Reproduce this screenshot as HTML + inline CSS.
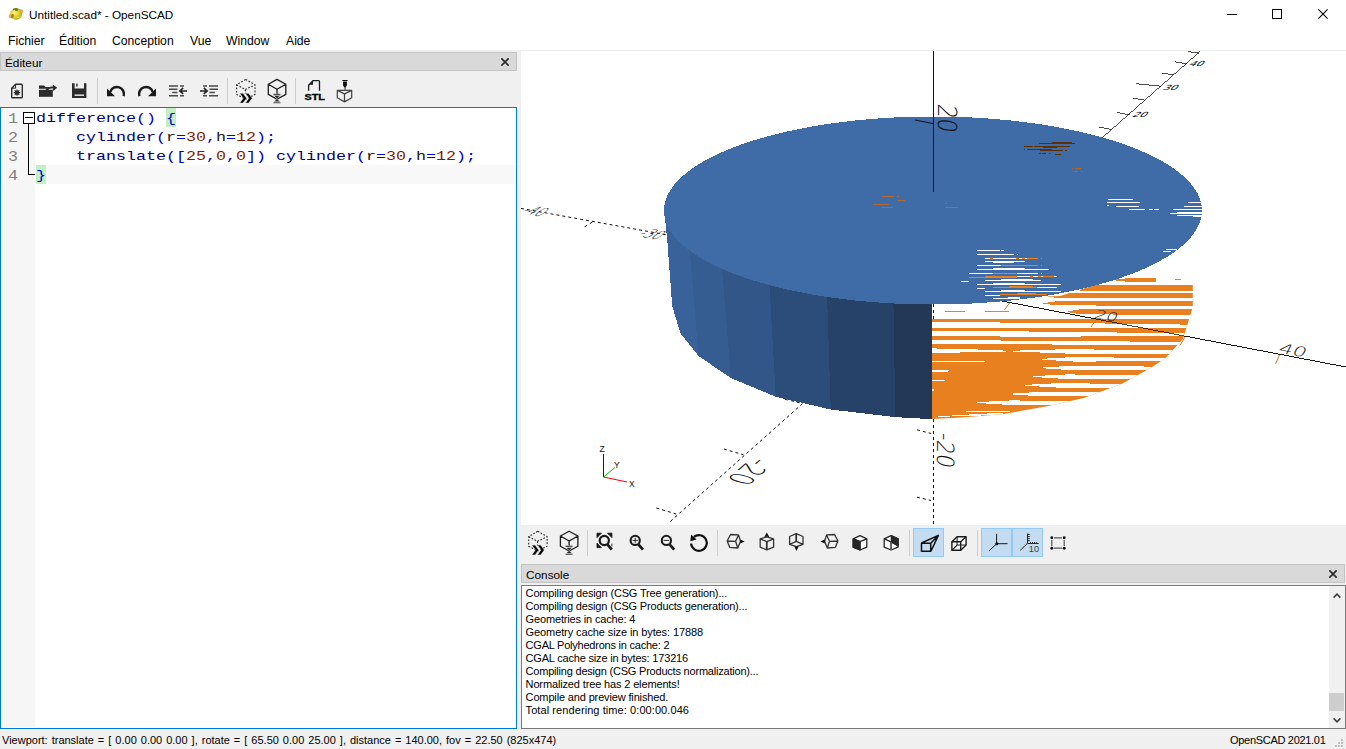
<!DOCTYPE html>
<html><head><meta charset="utf-8"><title>Untitled.scad* - OpenSCAD</title>
<style>
*{box-sizing:border-box;margin:0;padding:0}
html,body{width:1346px;height:749px;overflow:hidden;background:#f0f0f0;font-family:"Liberation Sans",sans-serif;font-size:12px;color:#000}
.abs{position:absolute}
#title{left:0;top:0;width:1346px;height:30px;background:#fff}
#title .t{position:absolute;left:29px;top:7px;font-size:11.75px;line-height:16px;white-space:nowrap}
#menu{left:0;top:30px;width:1346px;height:20px;background:#fff}
#menu span{position:absolute;top:3px;font-size:12.2px;line-height:16px;white-space:nowrap}
.dock{background:#d9d9d9;border:1px solid #c3c3c3;height:19px}
.dock .t{position:absolute;left:4px;top:2px;font-size:11.8px;line-height:16px}
.dock svg{position:absolute;right:7px;top:5px}
#ed{left:0;top:107px;width:517px;height:622px;border:1px solid #0078d7;background:#fff}
#ed .margin{position:absolute;left:1px;top:1px;width:33px;height:618px;background:#f6f6f6}
#ed .fold{display:none}
.ln{position:absolute;left:0;height:19px;line-height:19px;font-family:"Liberation Mono",monospace;font-size:12.6px;white-space:pre;transform-origin:0 0;transform:scaleX(1.3228)}
.num{color:#808080;font-size:14.4px;transform:scaleX(1.157)}
.b{color:#0000d0}.k{color:#00007f}.n{color:#7f1a00}.v{color:#202020}
#status{left:0;top:730px;width:1346px;height:19px;background:#f0f0f0;font-family:"Liberation Sans",sans-serif;font-size:11px}
#view{left:521px;top:51px;width:825px;height:474px;background:#fff;overflow:hidden}
#cons{left:521px;top:585px;width:825px;height:144px;background:#fff;border:1px solid #7a7a7a}
#cons .l{position:absolute;left:3.6px;font-size:11px;line-height:13px;white-space:nowrap}
</style></head><body>
<div id="title" class="abs"><svg class="abs" style="left:0;top:0" width="1346" height="30" viewBox="0 0 1346 30">
<defs><radialGradient id="yg" cx="0.38" cy="0.4" r="0.7"><stop offset="0" stop-color="#fff36e"/><stop offset="0.55" stop-color="#e9cb25"/><stop offset="1" stop-color="#a88c12"/></radialGradient></defs>
<ellipse cx="16" cy="13.8" rx="8" ry="3.3" fill="#d6a070" opacity="0.85" transform="rotate(-24 16 13.8)"/>
<circle cx="16" cy="13.9" r="5.9" fill="url(#yg)"/>
<ellipse cx="15.7" cy="9.4" rx="2.7" ry="1.5" fill="#5d7a1e"/>
<ellipse cx="14.6" cy="10.2" rx="0.8" ry="0.5" fill="#fff"/>
<ellipse cx="20" cy="16.3" rx="1.6" ry="2.7" fill="#a9d242" transform="rotate(28 20 16.3)"/>
<ellipse cx="18" cy="17.6" rx="0.6" ry="0.5" fill="#fff"/>
<ellipse cx="12.4" cy="16" rx="1.4" ry="2.1" fill="#8c8a2c" transform="rotate(20 12.4 16)"/>
<g stroke="#000" stroke-width="1" fill="none" shape-rendering="crispEdges"><path d="M1227 14.5H1237"/><rect x="1272.5" y="9.5" width="9" height="9"/></g>
<path d="M1318.4 9.4L1327.6 18.6M1327.6 9.4L1318.4 18.6" stroke="#000" stroke-width="1.05" fill="none"/>
</svg><span class="t">Untitled.scad* - OpenSCAD</span></div>
<div id="menu" class="abs">
<span style="left:8px">Fichier</span><span style="left:59px">Édition</span><span style="left:112px">Conception</span><span style="left:190px">Vue</span><span style="left:226px">Window</span><span style="left:286px">Aide</span>
</div>
<div class="abs dock" style="left:0;top:52px;width:517px"><span class="t">Éditeur</span><svg width="8" height="8" viewBox="0.5 0.5 8 8"><path d="M0.8 0.8L8.2 8.2M8.2 0.8L0.8 8.2" stroke="#2b2b2b" stroke-width="1.7" fill="none"/></svg></div>
<div id="ed" class="abs">
<div class="margin"></div><div class="fold"></div>
<div class="abs" style="left:35px;top:57px;width:479px;height:19px;background:#f8f8f8"></div>
<div class="abs" style="left:165px;top:0;width:10px;height:19px;background:#c0efc2"></div>
<div class="abs" style="left:35px;top:57px;width:10px;height:19px;background:#c0efc2"></div>
<svg class="abs" style="left:20px;top:0" width="16" height="80" viewBox="21 108 16 80" shape-rendering="crispEdges"><rect x="23.5" y="112.5" width="11" height="11" fill="#fff" stroke="#000"/><path d="M25 117.5H33M28.5 124V174.5H35" fill="none" stroke="#000"/></svg>
<div class="ln num" style="left:7px;top:2px">1</div>
<div class="ln num" style="left:7px;top:21px">2</div>
<div class="ln num" style="left:7px;top:40px">3</div>
<div class="ln num" style="left:7px;top:59px">4</div>
<div class="ln" style="left:35px;top:2px"><span class="k">difference</span><span class="b">() {</span></div>
<div class="ln" style="left:35px;top:21px">    <span class="k">cylinder</span><span class="b">(</span><span class="v">r</span><span class="b">=</span><span class="n">30</span><span class="b">,</span><span class="v">h</span><span class="b">=</span><span class="n">12</span><span class="b">);</span></div>
<div class="ln" style="left:35px;top:40px">    <span class="k">translate</span><span class="b">([</span><span class="n">25</span><span class="b">,</span><span class="n">0</span><span class="b">,</span><span class="n">0</span><span class="b">])</span> <span class="k">cylinder</span><span class="b">(</span><span class="v">r</span><span class="b">=</span><span class="n">30</span><span class="b">,</span><span class="v">h</span><span class="b">=</span><span class="n">12</span><span class="b">);</span></div>
<div class="ln" style="left:35px;top:59px"><span class="b">}</span></div>
</div>
<svg class="abs" style="left:521px;top:51px" width="825" height="474" viewBox="521 51 825 474" shape-rendering="crispEdges">
<rect x="521" y="51" width="825" height="474" fill="#fff"/>
<g stroke="#000" stroke-width="0.7" fill="none" shape-rendering="crispEdges">
<path d="M933.5 51V192"/>
<path d="M1002 301L1346 367"/>
<path d="M1101.5 137.5L1199.5 51"/>
<path d="M1099 127L1112 129.5"/>
<path d="M1116.9 112.5L1130.3 115"/>
<path d="M1132.9 98L1145.4 100.3"/>
<path d="M1136 83.7L1160.8 86.2"/>
<path d="M1161.7 73L1173.6 75"/>
<path d="M1175.2 61.9L1187.4 63.8"/>
<path d="M1188 51.6L1199 53.2"/>
<path d="M915 120L933 123.6"/>
</g>
<g stroke="#111" stroke-width="1" fill="none" stroke-dasharray="3 3" shape-rendering="auto">
<path d="M521 208.4L666 234.7"/>
<path d="M802.5 403.6L669 522.6"/>
<path d="M933.5 419V525"/>
<path d="M592.3 222.1L583.4 227.5"/>
<path d="M723.9 449L743.5 454.8"/>
<path d="M656.3 508L676.3 514"/>
<path d="M785 399.3L802.4 403.4"/>
<path d="M917 429.8L931.1 433.5"/>
<path d="M917 497.2L931.1 500.5"/>
</g>
<g font-family="DejaVu Sans Light,DejaVu Sans,Liberation Sans,sans-serif" font-weight="200" fill="#111" shape-rendering="auto">
<text transform="matrix(1.5,0.285,-0.437,0.903,1277.5,352.3)" font-size="14.1">40</text>
<text transform="matrix(1.05,0.19,-1.25,0.9,520,213)" font-size="12">-40</text>
<text transform="matrix(1.05,0.19,-1.25,0.9,637,236)" font-size="12">-30</text>
<text transform="matrix(-0.53,0.455,-0.96,-0.28,752.5,457.1)" font-size="31">-20</text>
</g>
<g font-family="DejaVu Sans,sans-serif" font-weight="400" font-size="10" fill="#000">
<text transform="matrix(1.1,0,-0.645,0.7,1131.4,116.6)">20</text>
<text transform="matrix(1.1,0,-0.645,0.7,1162,89.5)">30</text>
<text transform="matrix(1.1,0,-0.645,0.7,1188,65.5)">40</text>
</g>
<polygon fill="#365d92" points="664.2,210 667.4,241.7 672.2,305.8 680.3,333 698.5,356 730.9,378 775.7,396.7 830.8,409.5 895.3,417.1 932,419.2 932,300 700,240"/>
<polygon fill="#39629a" points="664.2,210 667.4,241.7 672.2,305.8 680.3,333 698.5,356 689.9,251.3"/>
<polygon fill="#365d92" points="689.9,248.3 721.9,265.9 730.9,378 698.5,356"/>
<polygon fill="#315687" points="721.9,265.9 769.4,282.6 775.7,396.7 730.9,378"/>
<polygon fill="#2c4d79" points="769.4,282.6 827,294.6 830.8,409.5 775.7,396.7"/>
<polygon fill="#264269" points="827,294.6 893.4,300.5 895.3,417.1 830.8,409.5"/>
<polygon fill="#233757" points="893.4,300.5 932,301.3 932,419.2 895.3,417.1"/>
<path d="M933.5 304V419" stroke="#111" stroke-width="1" stroke-dasharray="3 3"/>
<clipPath id="oc"><polygon points="932,300 1060,296 1120,277 1160,270 1192.8,284.5 1192.8,307 1183,339 1165.6,358 1151,367.8 1122,383.8 1083.8,398 1048.6,406 1003.7,414 962,417.5 932,419"/></clipPath>
<g clip-path="url(#oc)" fill="#e8801f">
<polygon points="1111,280 1125,278.5 1156,278.0 1156,282.0 1125,281.5"/>
<rect x="1175" y="279" width="6" height="1"/>
<polygon points="1066,288 1080,285.5 1200,285.0 1200,291.0 1080,290.5"/>
<polygon points="1042,295.5 1056,293.25 1200,292.75 1200,298.25 1056,297.75"/>
<polygon points="1042,303.3 1056,301.3 1200,300.55 1200,306.05 1056,305.3"/>
<polygon points="1066,311.8 1080,309.3 1200,308.55 1200,315.05 1080,314.3"/>
<polygon points="932,318.6 1200,318.6 1200,425 932,425"/>
</g>
<g clip-path="url(#oc)" fill="#fff">
<polygon points="932.0,322.4 1000.0,322.5 1070.0,322.8 1130.0,324.0 1200.0,324.7 1200.0,327.5 1130.0,327.6 1070.0,328.4 1000.0,328.1 932.0,327.6"/>
<polygon points="932.0,331.1 1000.0,331.3 1070.0,331.8 1130.0,332.7 1200.0,333.4 1200.0,336.0 1130.0,336.1 1070.0,336.6 1000.0,336.5 932.0,336.1"/>
<polygon points="932.0,339.5 980.0,340.2 1040.0,341.1 1070.0,340.5 1130.0,341.5 1200.0,342.2 1200.0,345.0 1130.0,344.9 1070.0,345.1 1040.0,344.1 980.0,344.4 932.0,344.5"/>
<polygon points="932.0,348.4 970.0,349.2 1010.0,350.8 1040.0,349.9 1070.0,349.1 1130.0,350.1 1200.0,350.7 1200.0,353.7 1130.0,353.5 1070.0,353.7 1040.0,352.5 1010.0,351.4 970.0,352.4 932.0,352.8"/>
<polygon points="1041.0,359.0 1051.0,358.2 1075.0,357.0 1121.0,357.6 1200.0,358.3 1200.0,361.3 1121.0,361.4 1075.0,361.6 1051.0,360.2 1041.0,359.4"/>
<polygon points="1041.0,367.7 1051.0,366.9 1075.0,365.7 1121.0,366.3 1200.0,367.0 1200.0,370.0 1121.0,370.1 1075.0,370.3 1051.0,368.9 1041.0,368.1"/>
<polygon points="1033.0,376.4 1043.0,375.6 1067.0,374.4 1113.0,375.0 1200.0,375.8 1200.0,378.8 1113.0,378.8 1067.0,379.0 1043.0,377.6 1033.0,376.8"/>
<polygon points="1025.0,385.1 1035.0,384.3 1059.0,383.1 1105.0,383.7 1200.0,384.5 1200.0,387.5 1105.0,387.5 1059.0,387.7 1035.0,386.3 1025.0,385.5"/>
<polygon points="1009.0,393.8 1019.0,393.0 1043.0,391.8 1089.0,392.4 1200.0,393.3 1200.0,396.3 1089.0,396.2 1043.0,396.4 1019.0,395.0 1009.0,394.2"/>
<polygon points="977.0,402.4 987.0,401.6 1011.0,400.4 1057.0,401.0 1200.0,402.0 1200.0,405.0 1057.0,404.8 1011.0,405.0 987.0,403.6 977.0,402.8"/>
<polygon points="966.0,411.1 985.0,410.6 1010.0,410.6 1010.0,412.2 985.0,412.2 966.0,411.7"/>
<polygon points="938.0,416.4 960.0,415.0 1003.0,412.6 1003.0,414.8 960.0,416.2 938.0,416.9"/>
<polygon points="932.0,360.6 985.0,361.2 985.0,361.8 932.0,362.4"/>
<polygon points="932.0,370.1 961.0,370.8 961.0,371.2 932.0,371.9"/>
<polygon points="932.0,379.8 945.0,380.2 945.0,380.8 932.0,381.2"/>
<polygon points="932.0,389.4 937.0,389.7 937.0,390.3 932.0,390.6"/>
</g>
<rect x="945" y="311" width="20" height="1" fill="#e8801f"/><rect x="985" y="311" width="24" height="1" fill="#e8801f"/>
<g stroke="#c87a2a" stroke-width="1" fill="none" shape-rendering="auto">
<path d="M1009.5 303L1004.4 310"/>
<path d="M1096.7 319L1091 327"/>
<path d="M1184.8 337.4L1180 345.4"/>
<path d="M1279.4 355L1275.5 364"/>
</g>
<path d="M1002 301L1346 367" stroke="#000" stroke-width="0.7" shape-rendering="crispEdges"/>
<g font-family="DejaVu Sans Light,DejaVu Sans,sans-serif" font-weight="200" fill="#111" shape-rendering="auto">
<text transform="matrix(1.4,0.25,-0.43,0.9,1093.5,317.8)" font-size="12.6">20</text>
</g>
<polygon fill="#3f6ba7" points="1202.0,210.5 1201.8,213.8 1201.3,217.1 1200.5,220.3 1199.4,223.6 1197.9,226.8 1196.1,230.0 1194.0,233.2 1191.6,236.4 1188.8,239.5 1185.8,242.6 1182.4,245.7 1178.7,248.7 1174.8,251.7 1170.5,254.6 1166.0,257.5 1161.1,260.3 1156.0,263.1 1150.6,265.8 1145.0,268.4 1139.1,270.9 1132.9,273.4 1126.5,275.8 1119.9,278.1 1113.0,280.4 1105.9,282.5 1098.6,284.6 1091.1,286.5 1083.4,288.4 1075.5,290.2 1067.5,291.9 1059.3,293.5 1050.9,295.0 1042.4,296.4 1033.8,297.7 1025.0,298.8 1016.1,299.9 1007.1,300.9 998.1,301.7 988.9,302.4 979.7,303.1 970.4,303.6 961.1,304.0 951.8,304.3 942.4,304.4 933.0,304.5 923.6,304.4 914.2,304.3 904.9,304.0 895.6,303.6 886.3,303.1 877.1,302.4 867.9,301.7 858.9,300.9 849.9,299.9 841.0,298.8 832.2,297.7 823.6,296.4 815.1,295.0 806.7,293.5 798.5,291.9 790.5,290.2 782.6,288.4 774.9,286.5 767.4,284.6 760.1,282.5 753.0,280.4 746.1,278.1 739.5,275.8 733.1,273.4 726.9,270.9 721.0,268.4 715.4,265.8 710.0,263.1 704.9,260.3 700.0,257.5 695.5,254.6 691.2,251.7 687.3,248.7 683.6,245.7 680.2,242.6 677.2,239.5 674.4,236.4 672.0,233.2 669.9,230.0 668.1,226.8 666.6,223.6 665.5,220.3 664.7,217.1 664.2,213.8 664.0,210.5 664.2,207.2 664.7,203.9 665.5,200.7 666.6,197.4 668.1,194.2 669.9,191.0 672.0,187.8 674.4,184.6 677.2,181.5 680.2,178.4 683.6,175.3 687.3,172.3 691.2,169.3 695.5,166.4 700.0,163.5 704.9,160.7 710.0,157.9 715.4,155.2 721.0,152.6 726.9,150.1 733.1,147.6 739.5,145.2 746.1,142.9 753.0,140.6 760.1,138.5 767.4,136.4 774.9,134.5 782.6,132.6 790.5,130.8 798.5,129.1 806.7,127.5 815.1,126.0 823.6,124.6 832.2,123.3 841.0,122.2 849.9,121.1 858.9,120.1 867.9,119.3 877.1,118.6 886.3,117.9 895.6,117.4 904.9,117.0 914.2,116.7 923.6,116.6 933.0,116.5 942.4,116.6 951.8,116.7 961.1,117.0 970.4,117.4 979.7,117.9 988.9,118.6 998.1,119.3 1007.1,120.1 1016.1,121.1 1025.0,122.2 1033.8,123.3 1042.4,124.6 1050.9,126.0 1059.3,127.5 1067.5,129.1 1075.5,130.8 1083.4,132.6 1091.1,134.5 1098.6,136.4 1105.9,138.5 1113.0,140.6 1119.9,142.9 1126.5,145.2 1132.9,147.6 1139.1,150.1 1145.0,152.6 1150.6,155.2 1156.0,157.9 1161.1,160.7 1166.0,163.5 1170.5,166.4 1174.8,169.3 1178.7,172.3 1182.4,175.3 1185.8,178.4 1188.8,181.5 1191.6,184.6 1194.0,187.8 1196.1,191.0 1197.9,194.2 1199.4,197.4 1200.5,200.7 1201.3,203.9 1201.8,207.2"/>
<path d="M933.5 51V192" stroke="#111" stroke-width="1"/>
<path d="M915 120L933 123.6" stroke="#111" stroke-width="1" shape-rendering="auto"/>
<rect x="977" y="250" width="23" height="1" fill="#fff"/>
<rect x="1001" y="250" width="3" height="1" fill="#fff"/>
<rect x="977" y="254" width="37" height="1" fill="#fff"/>
<rect x="1017" y="254" width="1" height="1" fill="#fff"/>
<rect x="985" y="258" width="42" height="1" fill="#fff"/>
<rect x="990" y="258" width="3" height="1" fill="#e8801f"/>
<rect x="1016" y="258" width="3" height="1" fill="#e8801f"/>
<rect x="1022" y="258" width="3" height="1" fill="#e8801f"/>
<rect x="1027" y="258" width="11" height="1" fill="#e8801f"/>
<rect x="1041" y="258" width="1" height="1" fill="#e8801f"/>
<rect x="985" y="261" width="40" height="1" fill="#fff"/>
<rect x="993" y="262" width="21" height="1" fill="#fff"/>
<rect x="977" y="265" width="24" height="1" fill="#fff"/>
<rect x="1001" y="265" width="37" height="1" fill="#e8801f"/>
<rect x="1041" y="265" width="1" height="1" fill="#e8801f"/>
<rect x="977" y="269" width="72" height="1" fill="#fff"/>
<rect x="993" y="268" width="32" height="1" fill="#fff"/>
<rect x="969" y="273" width="24" height="1" fill="#fff"/>
<rect x="993" y="273" width="24" height="1" fill="#e8801f"/>
<rect x="1017" y="273" width="21" height="1" fill="#fff"/>
<rect x="1041" y="273" width="1" height="1" fill="#fff"/>
<rect x="969" y="277" width="48" height="1" fill="#e8801f"/>
<rect x="985" y="276" width="32" height="1" fill="#e8801f"/>
<rect x="1017" y="276" width="40" height="1" fill="#fff"/>
<rect x="1030" y="276" width="3" height="1" fill="#e8801f"/>
<rect x="1038" y="276" width="3" height="1" fill="#e8801f"/>
<rect x="1043" y="276" width="11" height="1" fill="#e8801f"/>
<rect x="985" y="280" width="56" height="1" fill="#fff"/>
<rect x="1001" y="279" width="32" height="1" fill="#fff"/>
<rect x="961" y="281" width="8" height="1" fill="#fff"/>
<rect x="977" y="284" width="84" height="1" fill="#fff"/>
<rect x="993" y="283" width="32" height="1" fill="#fff"/>
<rect x="993" y="287" width="44" height="1" fill="#e8801f"/>
<rect x="1009" y="286" width="24" height="1" fill="#e8801f"/>
<rect x="1037" y="287" width="20" height="1" fill="#fff"/>
<rect x="977" y="288" width="8" height="1" fill="#fff"/>
<rect x="985" y="291" width="76" height="1" fill="#fff"/>
<rect x="1001" y="290" width="24" height="1" fill="#fff"/>
<rect x="985" y="295" width="15" height="1" fill="#fff"/>
<rect x="1000" y="294" width="47" height="1" fill="#e8801f"/>
<rect x="1017" y="293" width="19" height="1" fill="#e8801f"/>
<rect x="993" y="298" width="27" height="1" fill="#fff"/>
<rect x="1008" y="297" width="12" height="1" fill="#fff"/>
<rect x="1108" y="199" width="25" height="1" fill="#fff"/>
<rect x="1107" y="202" width="33" height="1" fill="#fff"/>
<rect x="1105" y="205" width="2" height="1" fill="#8a4a10"/>
<rect x="1107" y="205" width="2" height="1" fill="#fff"/>
<rect x="1116" y="206" width="23" height="1" fill="#fff"/>
<rect x="1129" y="209" width="16" height="1" fill="#fff"/>
<rect x="1149" y="209" width="4" height="1" fill="#fff"/>
<rect x="1154" y="209" width="5" height="1" fill="#fff"/>
<rect x="1173" y="209" width="30" height="1" fill="#fff"/>
<rect x="1188" y="202" width="13" height="1" fill="#fff"/>
<rect x="1184" y="206" width="18" height="1" fill="#fff"/>
<rect x="1177" y="212" width="26" height="2" fill="#fff"/>
<rect x="1170" y="213" width="7" height="1" fill="#fff"/>
<rect x="1177" y="215" width="26" height="1" fill="#fff"/>
<rect x="1193" y="216" width="9" height="1" fill="#fff"/>
<rect x="1039" y="143" width="36" height="1" fill="#5e2f05"/>
<rect x="1052" y="142" width="20" height="1" fill="#5e2f05"/>
<rect x="1024" y="146" width="9" height="1" fill="#5e2f05"/>
<rect x="1034" y="146" width="36" height="1" fill="#5e2f05"/>
<rect x="1043" y="147" width="14" height="1" fill="#5e2f05"/>
<rect x="1024" y="149" width="1" height="1" fill="#5e2f05"/>
<rect x="1027" y="149" width="25" height="1" fill="#5e2f05"/>
<rect x="1040" y="150" width="23" height="1" fill="#5e2f05"/>
<rect x="1065" y="150" width="2" height="1" fill="#5e2f05"/>
<rect x="1039" y="153" width="2" height="1" fill="#5e2f05"/>
<rect x="1042" y="153" width="4" height="1" fill="#5e2f05"/>
<rect x="1049" y="153" width="1" height="1" fill="#5e2f05"/>
<rect x="1055" y="154" width="6" height="1" fill="#5e2f05"/>
<rect x="1072" y="168" width="1" height="1" fill="#b06a30"/>
<rect x="1075" y="168" width="6" height="1" fill="#b06a30"/>
<rect x="1072" y="171" width="1" height="1" fill="#b06a30"/>
<rect x="1074" y="171" width="4" height="1" fill="#b06a30"/>
<rect x="1081" y="171" width="1" height="1" fill="#b06a30"/>
<rect x="882" y="196" width="12" height="1" fill="#b06a30"/>
<rect x="897" y="196" width="2" height="1" fill="#b06a30"/>
<rect x="897" y="200" width="8" height="1" fill="#b06a30"/>
<rect x="873" y="204" width="16" height="1" fill="#b06a30"/>
<rect x="881" y="207" width="12" height="1" fill="#b06a30"/>
<rect x="945" y="203" width="2" height="1" fill="#b06a30"/>
<rect x="945" y="207" width="13" height="1" fill="#b06a30"/>
<rect x="1166" y="249" width="11" height="1" fill="#fff"/>
<rect x="1163" y="251" width="8" height="1" fill="#fff"/>
<g font-family="DejaVu Sans Light,DejaVu Sans,Liberation Sans,sans-serif" font-weight="200" fill="#111" shape-rendering="auto">
<text transform="matrix(0,0.84,-1,-0.147,938.2,103.2)" font-size="26.2">20</text>
<text transform="matrix(0,0.9,-1,-0.198,937.4,431.6)" font-size="23.6">-20</text>
</g>
<g shape-rendering="auto" stroke-width="1" fill="none">
<path d="M603.5 477V454" stroke="#0000ff"/>
<path d="M603.5 477L627 482" stroke="#ff0000"/>
<path d="M603.5 477L615 467.5" stroke="#00c000"/>
</g>
<g font-family="Liberation Sans,sans-serif" fill="#111" font-size="8.5" shape-rendering="auto">
<text x="599.5" y="452">Z</text><text x="629" y="486.5">X</text><text x="614" y="468">Y</text>
</g>
</svg>
<svg class="abs" style="left:0;top:72px" width="517" height="35" viewBox="0 72 517 35">
<g stroke="#cdcdcd" stroke-width="1" shape-rendering="crispEdges"><path d="M97.5 78V104M227.5 78V104M295.5 78V104"/></g>
<g id="ic-new" fill="none" stroke="#2b2b2b" stroke-width="1.4" stroke-linejoin="round">
<path d="M15.6 84.3H21.4Q22.3 84.3 22.3 85.2V96.9Q22.3 97.8 21.4 97.8H12.6Q11.7 97.8 11.7 96.9V88.2Z"/>
<path d="M15.6 84.3V88.2H11.7" stroke-width="1"/>
<circle cx="17" cy="92.6" r="2.2" fill="#2b2b2b" stroke="none"/>
<path d="M17 89.4V95.8M13.8 92.6H20.2M14.7 90.3L19.3 94.9M19.3 90.3L14.7 94.9" stroke-width="1.1"/>
</g>
<g id="ic-open" fill="#2b2b2b" stroke="none">
<path d="M39 85.4H44L45.6 87H49.2V88.7H39Z"/>
<path d="M39 89.8H52.8V96.8H39Z"/>
<path d="M46.2 90.6Q48.6 86.9 53.4 87.4" fill="none" stroke="#2b2b2b" stroke-width="1.9"/>
<path d="M52.8 84.4L57.2 87.8L52.8 91.2Z"/>
</g>
<g id="ic-save" fill="#2b2b2b" stroke="none">
<path d="M72 83.2H74.6V88.6H84V83.2H86.4V98.1H72Z"/>
<rect x="76.2" y="83.6" width="1.4" height="3"/>
<rect x="74.6" y="94.4" width="9.4" height="1.6" fill="#d8d8d8"/>
</g>
<g id="ic-undo" fill="#1a1a1a" stroke="none">
<path d="M123.6 96.2A7 7 0 1 0 110.3 91.8" fill="none" stroke="#1a1a1a" stroke-width="2.5"/>
<path d="M107 88.4V96.2H115Z"/>
</g>
<g id="ic-redo" fill="#1a1a1a" stroke="none" transform="translate(263 0) scale(-1 1)">
<path d="M123.6 96.2A7 7 0 1 0 110.3 91.8" fill="none" stroke="#1a1a1a" stroke-width="2.5"/>
<path d="M107 88.4V96.2H115Z"/>
</g>
<g id="ic-unindent" fill="none" stroke="#4a4a4a" stroke-width="1.5">
<path d="M169 86H178M180 86H184M169 89.3H177.5M172.2 92.5H177.5M169 95.8H178M180 95.8H184"/>
<path d="M187 90.9H180.2M183.2 87.9L179.8 90.9L183.2 93.9" stroke="#222"/>
</g>
<g id="ic-indent" fill="none" stroke="#4a4a4a" stroke-width="1.5" transform="translate(387 0) scale(-1 1)">
<path d="M169 86H178M180 86H184M169 89.3H177.5M172.2 92.5H177.5M169 95.8H178M180 95.8H184"/>
<path d="M187 90.9H180.2M183.2 87.9L179.8 90.9L183.2 93.9" stroke="#222"/>
</g>
<g id="ic-preview">
<path d="M245.7 79.4L255 84.8V94.4L245.7 99.2L236.6 94.4V84.8ZM236.6 84.8L245.4 89.5L255 84.8M245.4 89.5V94" fill="none" stroke="#222" stroke-width="1.1" stroke-dasharray="1.7 1.6" stroke-width="1.2"/>
<path d="M239.7 93.3H243L246.6 98.2L243 103.1H239.7L243.3 98.2ZM245.3 93.3H248.6L252.2 98.2L248.6 103.1H245.3L248.9 98.2Z" fill="#000" stroke="#f0f0f0" stroke-width="0.5"/>
</g>
<g id="ic-render">
<path d="M277 79.4L285.8 84.2V94.4L277 99.2L268.3 94.4V84.2ZM268.3 84.2L277 89.2L285.8 84.2M277 89.2V94" fill="none" stroke="#1a1a1a" stroke-width="1.3" stroke-linejoin="round"/>
<path d="M273.4 93.8H280.6V95.2H273.4ZM273.9 95.6H280.1L277 98.7ZM277 98.7L280.1 101.8H273.9ZM273.4 102H280.6V103.2H273.4Z" fill="#222" stroke="#f0f0f0" stroke-width="0.4"/>
</g>
<g id="ic-stl" opacity="0.99">
<path d="M308.6 90.8V85.2L313 80.7H318.6Q319.5 80.7 319.5 81.6V90.8" fill="none" stroke="#1a1a1a" stroke-width="1.3"/>
<path d="M309 84.8L313 80.6V84.8Z" fill="#1a1a1a"/>
<text x="304.5" y="100.3" font-family="Liberation Sans,sans-serif" font-weight="700" font-size="9.8" textLength="20.4" lengthAdjust="spacingAndGlyphs" fill="#000" stroke="#000" stroke-width="0.35">STL</text>
</g>
<g id="ic-print">
<path d="M342.4 80H347.6V81H342.4ZM343 81.6H346.9V85.2Q346.9 86 345 87.7Q343 86 343 85.2Z" fill="#111"/>
<path d="M345.1 87V90.2" stroke="#222" stroke-width="0.9"/>
<path d="M337.3 90.4H351.7V97.8L344.5 101.9L337.3 97.8ZM337.3 90.4L344.5 93.9L351.7 90.4M344.5 93.9V101.9" fill="none" stroke="#444" stroke-width="1.25" stroke-linejoin="round"/>
</g>
</svg>

<svg class="abs" style="left:521px;top:525px" width="825" height="38" viewBox="521 525 825 38">
<g shape-rendering="crispEdges">
<rect x="913.5" y="528.5" width="30" height="28" fill="#c3dcf2" stroke="#92c9f5"/>
<rect x="981.5" y="528.5" width="61" height="28" fill="#c3dcf2" stroke="#92c9f5"/><path d="M1012 529V556" stroke="#92c9f5" stroke-width="2"/>
<path d="M587.5 530V556M717.5 530V556M909.5 530V556M977.5 530V556" stroke="#cdcdcd" stroke-width="1"/>
</g>
<g transform="translate(292.1 451.8)">
<path d="M245.7 79.4L255 84.8V94.4L245.7 99.2L236.6 94.4V84.8ZM236.6 84.8L245.4 89.5L255 84.8M245.4 89.5V94" fill="none" stroke="#222" stroke-width="1.1" stroke-dasharray="1.7 1.6" stroke-width="1.2"/>
<path d="M239.7 93.3H243L246.6 98.2L243 103.1H239.7L243.3 98.2ZM245.3 93.3H248.6L252.2 98.2L248.6 103.1H245.3L248.9 98.2Z" fill="#000" stroke="#f0f0f0" stroke-width="0.5"/>
<path d="M277 79.4L285.8 84.2V94.4L277 99.2L268.3 94.4V84.2ZM268.3 84.2L277 89.2L285.8 84.2M277 89.2V94" fill="none" stroke="#1a1a1a" stroke-width="1.3" stroke-linejoin="round"/>
<path d="M273.4 93.8H280.6V95.2H273.4ZM273.9 95.6H280.1L277 98.7ZM277 98.7L280.1 101.8H273.9ZM273.4 102H280.6V103.2H273.4Z" fill="#222" stroke="#f0f0f0" stroke-width="0.4"/>
</g>
<g id="v-all" fill="none" stroke="#1a1a1a">
<circle cx="604.3" cy="540.5" r="4.6" stroke-width="2.2"/>
<path d="M607.6 544.6L611.8 549.6" stroke-width="2.8"/>
<path d="M597 537.6V533.2H601.4L599.6 535H598.8V535.8ZM611.9 537.6V533.2H607.5L609.3 535H610.1V535.8ZM597 543.2V547.6H601.4L599.6 545.8H598.8V545ZM611.9 543.6V546.4" stroke-width="0.9" fill="#111"/>
</g>
<g id="v-in" fill="none" stroke="#1a1a1a">
<circle cx="635.2" cy="540.4" r="4.6" stroke-width="2.1"/>
<path d="M638.6 544.6L643 549.6" stroke-width="2.8"/>
<path d="M632.5 540.4H637.9M635.2 537.7V543.1" stroke-width="0.9"/>
</g>
<g id="v-out" fill="none" stroke="#1a1a1a">
<circle cx="666.4" cy="540.4" r="4.6" stroke-width="2.1"/>
<path d="M669.8 544.6L674.2 549.6" stroke-width="2.8"/>
<path d="M663.6 540.4H669" stroke-width="0.9"/>
</g>
<g id="v-reset">
<path d="M693.9 536.9A7.85 7.85 0 1 1 691.1 543.5" fill="none" stroke="#111" stroke-width="2.2"/>
<path d="M691.1 534.6L690.3 541.2L696.6 539.6Z" fill="#111"/>
</g>
<g id="v-right" fill="none" stroke="#333" stroke-width="1.3" stroke-linejoin="round">
<path d="M727.2 541L730.5 534.5L738.5 534.9L740.5 541.3L737.8 548L729.7 547.3ZM727.2 541L735.6 541.3L738.5 534.9M735.6 541.3L737.8 548"/>
<path d="M740.3 539.4L744.7 541.5L740.3 543.4Z" fill="#111" stroke="none"/>
</g>
<g id="v-left" fill="none" stroke="#333" stroke-width="1.3" stroke-linejoin="round" transform="translate(1565.1 0) scale(-1 1)">
<path d="M727.2 541L730.5 534.5L738.5 534.9L740.5 541.3L737.8 548L729.7 547.3ZM727.2 541L735.6 541.3L738.5 534.9M735.6 541.3L737.8 548"/>
<path d="M740.3 539.4L744.7 541.5L740.3 543.4Z" fill="#111" stroke="none"/>
</g>
<g id="v-top" fill="none" stroke="#333" stroke-width="1.3" stroke-linejoin="round">
<path d="M766.8 536.8L773.6 538.9V547.2L766.8 549.8L760.2 547.2V538.9ZM760.2 538.9L766.8 541.7L773.6 538.9"/>
<path d="M766.8 541.7V549.8" stroke-width="1.8"/>
<path d="M766.8 532.4L769.4 537.2L766.8 536.4L764.2 537.2Z" fill="#111" stroke="none"/>
</g>
<g id="v-bottom" fill="none" stroke="#333" stroke-width="1.3" stroke-linejoin="round">
<path d="M796.2 533.6L803 536.5V544.3L796.4 546.6L789.6 544.3V536.5ZM789.6 544.3L796.2 541.4L803 544.3"/>
<path d="M796.2 533.6V541.4" stroke-width="1.8"/>
<path d="M794.2 546.2L796.4 546.8L798.8 546.2L796.5 550.9Z" fill="#111" stroke="none"/>
</g>
<g id="v-front" fill="none" stroke="#262626" stroke-width="1.3" stroke-linejoin="round">
<path d="M860 535.6L866.8 538.9V547.2L860 550L853.2 547.2V538.9Z" fill="#fafafa"/>
<path d="M853.2 538.9L860 541.6V550L853.2 547.2Z" fill="#262626"/>
<path d="M853.2 538.9L860 541.6L866.8 538.9M860 541.6V550"/>
</g>
<g id="v-back" fill="none" stroke="#262626" stroke-width="1.3" stroke-linejoin="round">
<path d="M891 535.6L898.1 538.9V547.2L891 550L884.2 547.2V538.9Z" fill="#fafafa"/>
<path d="M891.4 535.8L898.1 538.9V545.6L891.4 541.9Z" fill="#262626"/>
<path d="M884.2 538.9L891 541.9L898.1 545.6"/>
<path d="M891 541.9V550" stroke-width="1.8" stroke="#555"/>
</g>
<g id="v-persp" fill="none" stroke="#111" stroke-width="1.5" stroke-linejoin="round">
<path d="M921.5 543.2H930.7V551.3H921.5ZM921.5 543L938.4 535.4L930.9 551.3M930.7 543.2L938.4 535.4"/>
</g>
<g id="v-ortho" fill="none" stroke="#1a1a1a" stroke-width="1.4" stroke-linejoin="round">
<path d="M951.9 541.7L957.1 536.8H966.1V545L960.7 550.3H951.9Z" fill="#f8f8f8"/>
<path d="M951.9 541.7H960.7V550.3M960.7 541.7L966.1 536.8"/>
<path d="M957.1 536.8V545H966.1M951.9 550.3L957.1 545" stroke-width="1.1" stroke="#222"/>
</g>
<g id="v-axes" fill="none" stroke="#1a1a1a" stroke-width="1">
<path d="M996.6 533.8V543.7H1007.6M996.8 543.7L989.1 550.8"/>
<circle cx="996.8" cy="543.8" r="1.5" fill="#111" stroke="none"/>
</g>
<g id="v-scale" fill="none" stroke="#2a2a2a" stroke-width="1">
<path d="M1027.5 533.5V543.5H1038.7M1027.5 534.4H1029.8M1027.5 536.5H1029.8M1027.5 538.6H1029.8M1027.5 540.7H1029.8M1030.5 543.5V542M1032.5 543.5V542M1034.5 543.5V542M1036.6 543.5V542"/>
<path d="M1027.3 543.7L1020.2 550.5" stroke="#444" stroke-width="0.9"/>
<path d="M1026.2 543.4L1027 544.4M1024.8 544.6L1025.8 545.8M1023.4 546L1024.4 547.2M1022 547.4L1023 548.6M1020.6 548.8L1021.6 550" stroke="#444" stroke-width="0.8"/>
<text x="1028.8" y="551.8" font-family="Liberation Sans,sans-serif" font-size="8.4" fill="#3a3a3a" stroke="none" textLength="10.2" lengthAdjust="spacingAndGlyphs">10</text>
</g>
<g id="v-edges" fill="none" stroke="#555" stroke-width="1.2">
<path d="M1054 537.8H1062M1054 548.2H1062M1051.8 540V546M1064.2 540V546"/>
<g fill="#111" stroke="none"><circle cx="1051.8" cy="537.8" r="1.45"/><circle cx="1064.2" cy="537.8" r="1.45"/><circle cx="1051.8" cy="548.2" r="1.45"/><circle cx="1064.2" cy="548.2" r="1.45"/></g>
</g>
</svg>

<div class="abs dock" style="left:521px;top:564px;width:824px"><span class="t">Console</span><svg width="8" height="8" viewBox="0.5 0.5 8 8"><path d="M0.8 0.8L8.2 8.2M8.2 0.8L0.8 8.2" stroke="#2b2b2b" stroke-width="1.7" fill="none"/></svg></div>
<div id="cons" class="abs">
<div class="abs" style="left:807px;top:0;width:16px;height:142px;background:#f0f0f0"></div>
<div class="abs" style="left:807px;top:107px;width:15px;height:18px;background:#cdcdcd"></div>
<svg class="abs" style="left:807px;top:0" width="16" height="142" viewBox="0 0 16 142"><path d="M4.6 11.6L8 8.2L11.4 11.6M4.6 132.4L8 135.8L11.4 132.4" fill="none" stroke="#404040" stroke-width="1.6"/></svg>
<div class="l" style="top:1px;letter-spacing:-0.156px">Compiling design (CSG Tree generation)...</div>
<div class="l" style="top:14px;letter-spacing:-0.169px">Compiling design (CSG Products generation)...</div>
<div class="l" style="top:27px;letter-spacing:-0.155px">Geometries in cache: 4</div>
<div class="l" style="top:40px;letter-spacing:-0.103px">Geometry cache size in bytes: 17888</div>
<div class="l" style="top:53px;letter-spacing:-0.225px">CGAL Polyhedrons in cache: 2</div>
<div class="l" style="top:66px;letter-spacing:-0.188px">CGAL cache size in bytes: 173216</div>
<div class="l" style="top:79px;letter-spacing:-0.208px">Compiling design (CSG Products normalization)...</div>
<div class="l" style="top:92px;letter-spacing:-0.142px">Normalized tree has 2 elements!</div>
<div class="l" style="top:105px;letter-spacing:-0.147px">Compile and preview finished.</div>
<div class="l" style="top:118px;letter-spacing:0.079px">Total rendering time: 0:00:00.046</div>
</div>
<div id="status" class="abs"><span class="abs" style="left:2px;top:4px;white-space:nowrap;word-spacing:0.95px">Viewport: translate = [ 0.00 0.00 0.00 ], rotate = [ 65.50 0.00 25.00 ], distance = 140.00, fov = 22.50 (825x474)</span><span class="abs" style="left:1230px;top:4px;white-space:nowrap;letter-spacing:-0.3px">OpenSCAD 2021.01</span></div>
<svg class="abs" style="left:1334px;top:738px" width="10" height="10" viewBox="1334 738 10 10" shape-rendering="crispEdges"><g fill="#bfbfbf"><rect x="1341" y="739" width="2" height="2"/><rect x="1338" y="742" width="2" height="2"/><rect x="1341" y="742" width="2" height="2"/><rect x="1335" y="745" width="2" height="2"/><rect x="1338" y="745" width="2" height="2"/><rect x="1341" y="745" width="2" height="2"/></g></svg>
</body></html>
